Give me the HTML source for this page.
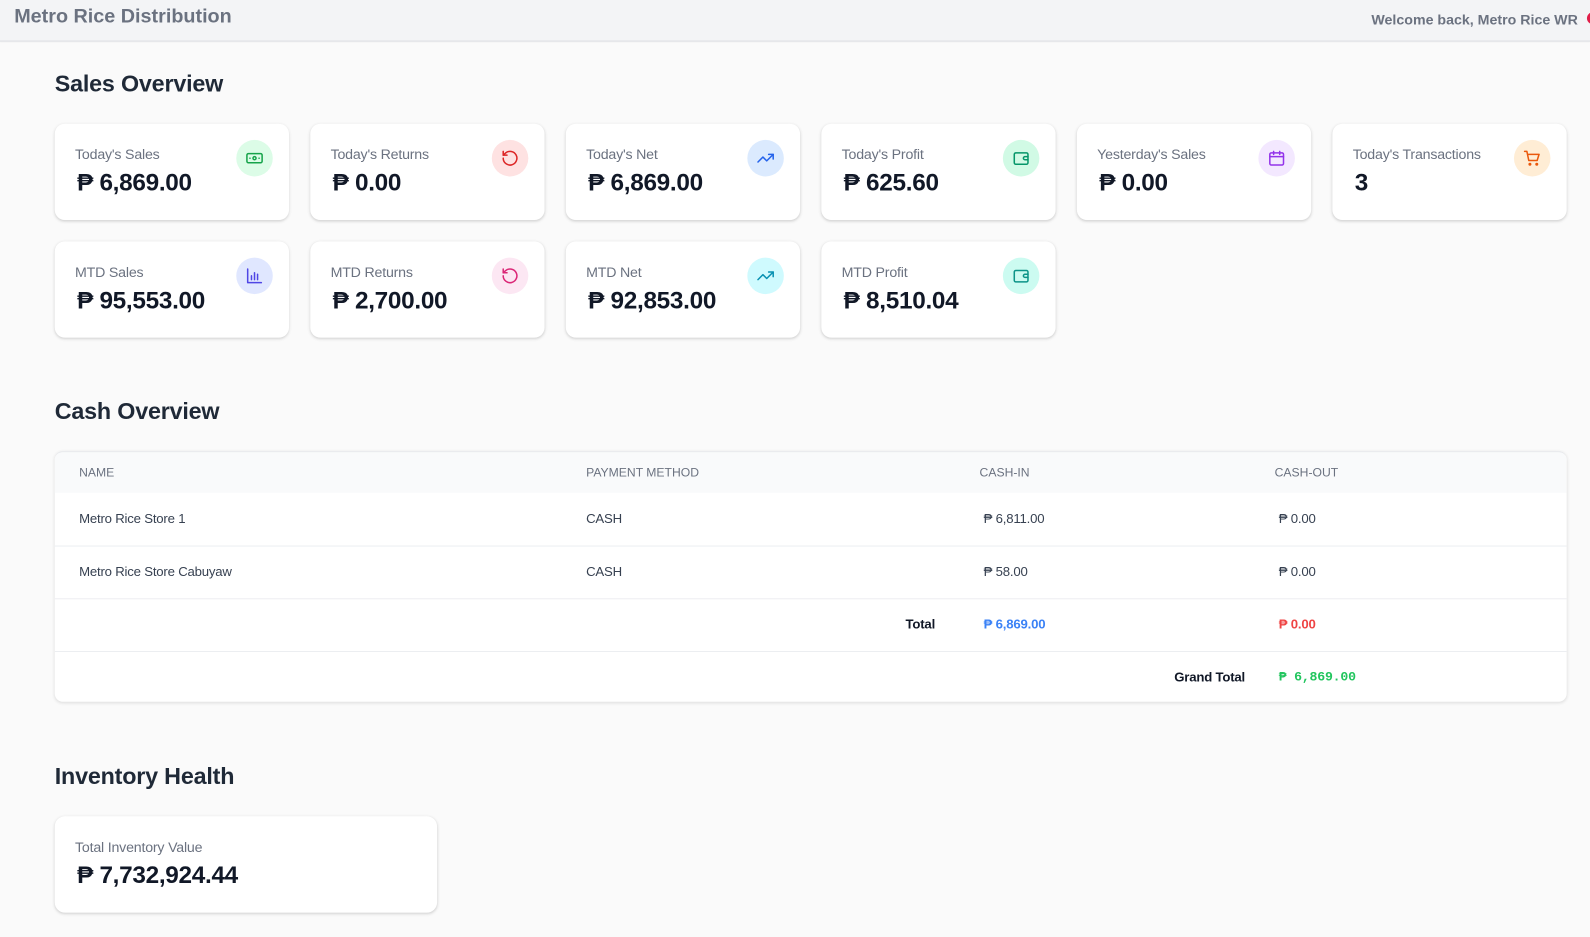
<!DOCTYPE html>
<html><head><meta charset="utf-8">
<style>
*{margin:0;padding:0;box-sizing:border-box}
html,body{width:1590px;height:937px;overflow:hidden;background:#fafafa}
body{font-family:"Liberation Sans","DejaVu Sans",sans-serif;color:#111827}
#wrap{position:absolute;left:0;top:0;width:1568px;height:924px;transform:scale(1.01403);transform-origin:0 0}
.hdr{position:absolute;left:0;top:0;width:1568px;height:41px;background:#f3f4f6;border-bottom:1px solid #dcdee2;box-shadow:0 1px 2px rgba(0,0,0,.06)}
.hdr .t{position:absolute;left:14px;top:5px;font-size:19.5px;font-weight:bold;color:#6b7280}
.hdr .w{position:absolute;right:12px;top:11px;font-size:14px;font-weight:bold;color:#6b7280}
.hdr .dot{position:absolute;left:1565px;top:12px;width:12px;height:12px;border-radius:50%;background:#e11d48}
h2{position:absolute;left:54px;font-size:23px;font-weight:bold;color:#1f2937;letter-spacing:-0.2px}
.card{position:absolute;width:231px;height:95px;background:#fff;border-radius:10px;box-shadow:0 1px 3px rgba(0,0,0,.12),0 1px 2px rgba(0,0,0,.05)}
.card .l{position:absolute;left:20px;top:22px;font-size:14px;color:#6b7280;letter-spacing:-0.2px}
.card .v{position:absolute;left:22px;top:45px;font-size:24px;font-weight:bold;color:#111827;letter-spacing:-0.3px}
.card .ic{position:absolute;right:16px;top:16px;width:36px;height:36px;border-radius:50%;display:flex;align-items:center;justify-content:center}
.card .ic svg{width:18px;height:18px;fill:none;stroke-width:2;stroke-linecap:round;stroke-linejoin:round}
.tbl{position:absolute;left:54px;top:445px;width:1491px;height:247px;background:#fff;border-radius:8px;box-shadow:0 1px 3px rgba(0,0,0,.12);overflow:hidden;border-top:1px solid #e5e7eb}
.th{position:absolute;left:0;top:0;width:100%;height:40px;background:#f9fafb}
.c{position:absolute;font-size:13px;color:#374151;letter-spacing:-0.2px}
.thc{font-size:12px;color:#6b7280;top:13px;letter-spacing:0}
.rl{position:absolute;left:0;width:100%;height:1px;background:#eceef1}
</style></head><body>
<div id="wrap">
<div class="hdr"><div class="t">Metro Rice Distribution</div><div class="w">Welcome back, Metro Rice WR</div><div class="dot"></div></div>

<h2 style="top:69px">Sales Overview</h2>

<div class="card" style="left:54px;top:122px"><div class="l">Today's Sales</div><div class="v">₱ 6,869.00</div><div class="ic" style="background:#dcfce7"><svg viewBox="0 0 24 24" style="stroke:#16a34a"><rect x="2" y="6" width="20" height="12" rx="2"/><circle cx="12" cy="12" r="2"/><path d="M6 12h.01M18 12h.01"/></svg></div></div>
<div class="card" style="left:306px;top:122px"><div class="l">Today's Returns</div><div class="v">₱ 0.00</div><div class="ic" style="background:#fee2e2"><svg viewBox="0 0 24 24" style="stroke:#dc2626"><path d="M3 12a9 9 0 1 0 3-6.7L3 8"/><path d="M3 3v5h5"/></svg></div></div>
<div class="card" style="left:558px;top:122px"><div class="l">Today's Net</div><div class="v">₱ 6,869.00</div><div class="ic" style="background:#dbeafe"><svg viewBox="0 0 24 24" style="stroke:#2563eb"><path d="M22 7l-8.5 8.5-5-5L2 17"/><path d="M16 7h6v6"/></svg></div></div>
<div class="card" style="left:810px;top:122px"><div class="l">Today's Profit</div><div class="v">₱ 625.60</div><div class="ic" style="background:#d1fae5"><svg viewBox="0 0 24 24" style="stroke:#059669"><rect x="3" y="5" width="18" height="15" rx="2"/><path d="M21 10h-4a2 2 0 0 0 0 4h4"/></svg></div></div>
<div class="card" style="left:1062px;top:122px"><div class="l">Yesterday's Sales</div><div class="v">₱ 0.00</div><div class="ic" style="background:#f3e8ff"><svg viewBox="0 0 24 24" style="stroke:#9333ea"><rect x="3" y="5" width="18" height="16" rx="2"/><path d="M8 3v4M16 3v4M3 10h18"/></svg></div></div>
<div class="card" style="left:1314px;top:122px"><div class="l">Today's Transactions</div><div class="v">3</div><div class="ic" style="background:#ffedd5"><svg viewBox="0 0 24 24" style="stroke:#ea580c"><path d="M2 3h3l2.5 12h11l2.5-8H6.5"/><circle cx="9" cy="20" r="1"/><circle cx="18" cy="20" r="1"/></svg></div></div>

<div class="card" style="left:54px;top:238px"><div class="l">MTD Sales</div><div class="v">₱ 95,553.00</div><div class="ic" style="background:#e0e7ff"><svg viewBox="0 0 24 24" style="stroke:#4f46e5"><path d="M3 3v18h18M8 17v-5M12 17V8M16 17v-7"/></svg></div></div>
<div class="card" style="left:306px;top:238px"><div class="l">MTD Returns</div><div class="v">₱ 2,700.00</div><div class="ic" style="background:#fce7f3"><svg viewBox="0 0 24 24" style="stroke:#db2777"><path d="M3 12a9 9 0 1 0 3-6.7L3 8"/><path d="M3 3v5h5"/></svg></div></div>
<div class="card" style="left:558px;top:238px"><div class="l">MTD Net</div><div class="v">₱ 92,853.00</div><div class="ic" style="background:#cffafe"><svg viewBox="0 0 24 24" style="stroke:#0891b2"><path d="M22 7l-8.5 8.5-5-5L2 17"/><path d="M16 7h6v6"/></svg></div></div>
<div class="card" style="left:810px;top:238px"><div class="l">MTD Profit</div><div class="v">₱ 8,510.04</div><div class="ic" style="background:#ccfbf1"><svg viewBox="0 0 24 24" style="stroke:#0d9488"><rect x="3" y="5" width="18" height="15" rx="2"/><path d="M21 10h-4a2 2 0 0 0 0 4h4"/></svg></div></div>

<h2 style="top:392px">Cash Overview</h2>
<div class="tbl">
 <div class="th"></div>
 <div class="c thc" style="left:24px">NAME</div>
 <div class="c thc" style="left:524px">PAYMENT METHOD</div>
 <div class="c thc" style="left:912px">CASH-IN</div>
 <div class="c thc" style="left:1203px">CASH-OUT</div>
 <div class="c" style="left:24px;top:58px">Metro Rice Store 1</div>
 <div class="c" style="left:524px;top:58px">CASH</div>
 <div class="c" style="left:916px;top:58px">₱ 6,811.00</div>
 <div class="c" style="left:1207px;top:58px">₱ 0.00</div>
 <div class="rl" style="top:92px"></div>
 <div class="c" style="left:24px;top:110px">Metro Rice Store Cabuyaw</div>
 <div class="c" style="left:524px;top:110px">CASH</div>
 <div class="c" style="left:916px;top:110px">₱ 58.00</div>
 <div class="c" style="left:1207px;top:110px">₱ 0.00</div>
 <div class="rl" style="top:144px"></div>
 <div class="c" style="left:839px;top:162px;font-weight:bold;color:#111827">Total</div>
 <div class="c" style="left:916px;top:162px;color:#3b82f6;font-weight:bold">₱ 6,869.00</div>
 <div class="c" style="left:1207px;top:162px;color:#ef4444;font-weight:bold">₱ 0.00</div>
 <div class="rl" style="top:196px"></div>
 <div class="c" style="left:1104px;top:214px;font-weight:bold;color:#111827">Grand Total</div>
 <div class="c" style="left:1207px;top:214px;color:#22c55e;font-weight:bold;font-family:'Liberation Mono','DejaVu Sans Mono',monospace;font-size:13px">₱ 6,869.00</div>
</div>

<h2 style="top:752px">Inventory Health</h2>
<div class="card" style="left:54px;top:805px;width:377px"><div class="l">Total Inventory Value</div><div class="v">₱ 7,732,924.44</div></div>
</div>
</body></html>
